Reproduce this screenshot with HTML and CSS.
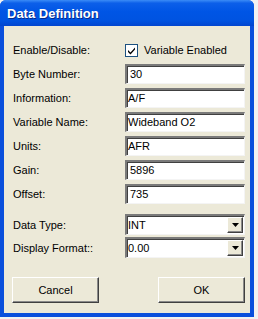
FILE: index.html
```html
<!DOCTYPE html>
<html>
<head>
<meta charset="utf-8">
<link rel="stylesheet" href="styles.css">
</head>
<body>
<div class="window">
  <div class="titlebar"><span class="title">Data Definition</span></div>
  <div class="client">
    <div class="rows">
      <div class="row">
        <span class="label">Enable/Disable:</span>
        <label class="check">
          <span class="box"><svg width="9" height="9" viewBox="0 0 9 9"><path d="M1 4 L3.5 6.5 L8 1.5 L8 3.5 L3.5 8.5 L1 6 Z" fill="#000"/></svg></span>
          <span>Variable Enabled</span>
        </label>
      </div>
      <div class="row"><span class="label">Byte Number:</span><div class="field pad">30</div></div>
      <div class="row"><span class="label">Information:</span><div class="field">A/F</div></div>
      <div class="row"><span class="label">Variable Name:</span><div class="field">Wideband O2</div></div>
      <div class="row"><span class="label">Units:</span><div class="field">AFR</div></div>
      <div class="row"><span class="label">Gain:</span><div class="field pad">5896</div></div>
      <div class="row"><span class="label">Offset:</span><div class="field pad">735</div></div>
    </div>
    <div class="rows combos">
      <div class="row crow"><span class="label">Data Type:</span><div class="combo"><span class="cval">INT</span><span class="arrow"><svg width="7" height="4" viewBox="0 0 7 4"><path d="M0 0 H7 L3.5 4 Z" fill="#000"/></svg></span></div></div>
      <div class="row crow"><span class="label">Display Format::</span><div class="combo"><span class="cval">0.00</span><span class="arrow"><svg width="7" height="4" viewBox="0 0 7 4"><path d="M0 0 H7 L3.5 4 Z" fill="#000"/></svg></span></div></div>
    </div>
    <div class="buttons">
      <button class="btn">Cancel</button>
      <button class="btn">OK</button>
    </div>
  </div>
</div>
</body>
</html>
```
FILE: styles.css
```css
html, body {
  margin: 0;
  padding: 0;
  background: #f2f2f2;
}
body {
  width: 258px;
  height: 319px;
  overflow: hidden;
  font-family: "Liberation Sans", Arial, sans-serif;
  font-size: 11px;
  color: #000;
}
.window {
  width: 254px;
  height: 317px;
  box-sizing: border-box;
  display: flex;
  flex-direction: column;
  background: #0a4fdc;
  border-radius: 6px 6px 0 0;
  overflow: hidden;
}
.titlebar {
  height: 26px;
  flex: none;
  display: flex;
  align-items: center;
  padding-left: 7px;
  background: linear-gradient(to bottom, #3b8cf7 0%, #0c5fe9 12%, #0055e5 45%, #0053e0 80%, #0246cf 100%);
}
.title {
  color: #fff;
  font-weight: bold;
  font-size: 13px;
  text-shadow: 1px 1px 0 #0a2a8a;
  margin-top: 1px;
}
.client {
  flex: 1;
  margin: 0 4px 4px 4px;
  background: #ece9d8;
  display: flex;
  flex-direction: column;
  padding: 14px 5px 0 9px;
}
.rows {
  display: flex;
  flex-direction: column;
  gap: 4px;
}
.row {
  display: grid;
  grid-template-columns: 112px 120px;
  height: 20px;
  align-items: center;
}
.label {
  white-space: nowrap;
}
.check {
  display: flex;
  align-items: center;
  gap: 6px;
}
.box {
  width: 11px;
  height: 11px;
  border: 1px solid #1c5180;
  background: #fff;
  display: flex;
  align-items: center;
  justify-content: center;
}
.field {
  height: 20px;
  box-sizing: border-box;
  background: #fff;
  border-top: 2px solid #7a7a7a;
  border-left: 2px solid #7a7a7a;
  border-right: 1px solid #f4f4f4;
  border-bottom: 1px solid #f4f4f4;
  box-shadow: inset 1px 1px 0 #404040;
  padding-left: 1px;
  line-height: 17px;
}
.field.pad {
  padding-left: 3px;
}
.combos {
  margin-top: 10px;
  gap: 2px;
}
.crow {
  height: 21px;
}
.combo {
  height: 21px;
  box-sizing: border-box;
  background: #fff;
  border-top: 2px solid #7a7a7a;
  border-left: 2px solid #7a7a7a;
  border-right: 1px solid #f4f4f4;
  border-bottom: 1px solid #f4f4f4;
  box-shadow: inset 1px 1px 0 #404040;
  display: flex;
  align-items: stretch;
}
.cval {
  flex: 1;
  padding-left: 1px;
  line-height: 18px;
}
.arrow {
  width: 16px;
  box-sizing: border-box;
  background: #ece9d8;
  border-top: 1px solid #fff;
  border-left: 1px solid #fff;
  border-right: 1px solid #404040;
  border-bottom: 1px solid #404040;
  box-shadow: inset -1px -1px 0 #8a8a8a;
  display: flex;
  align-items: center;
  justify-content: center;
  margin: 1px 1px 1px 0;
}
.buttons {
  margin-top: 19px;
  display: flex;
  justify-content: space-between;
  width: 233px;
  margin-left: -1px;
}
.btn {
  width: 87px;
  height: 26px;
  box-sizing: border-box;
  font-family: "Liberation Sans", Arial, sans-serif;
  font-size: 11px;
  color: #000;
  background: #ece9d8;
  border-top: 1px solid #fff;
  border-left: 1px solid #fff;
  border-right: 1px solid #404040;
  border-bottom: 1px solid #404040;
  box-shadow: inset -1px -1px 0 #8a8a8a;
  padding: 0;
}
```
